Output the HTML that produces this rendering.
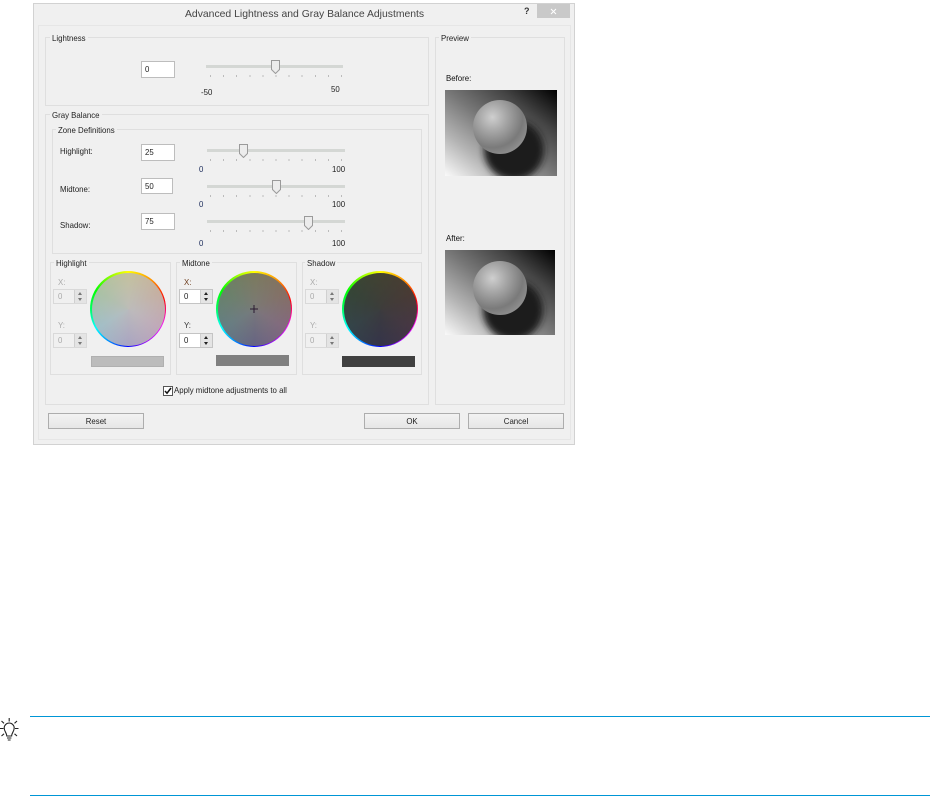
<!DOCTYPE html>
<html><head><meta charset="utf-8">
<style>
html,body{margin:0;padding:0;background:#fff;width:930px;height:796px;overflow:hidden}
body{position:relative;font-family:"Liberation Sans",sans-serif;font-size:7.85px;color:#222}
div,span,svg{position:absolute;box-sizing:border-box}
#w{left:0;top:0;width:930px;height:796px;filter:blur(.3px)}
.t{white-space:nowrap;line-height:12px;height:12px}
.g{border:1px solid #dfdfdf}
.leg{background:#f0f0f0;padding:0 2px;white-space:nowrap;line-height:11px;height:10px}
.in{background:#fff;border:1px solid #bdbdbd;padding-left:3px;line-height:16px}
.track{height:3px;background:#d4d7d4}
.ticks{height:2px;background:repeating-linear-gradient(90deg,#bbb 0 1px,transparent 1px 13.1px)}
.thumb{width:9px;height:14px}
.btn{width:96px;height:16px;border:1px solid #adadad;background:linear-gradient(#f2f2f2,#e6e6e6);text-align:center;line-height:15px}
.sp{width:34px;height:15px;border:1px solid #d9d9d9;background:#f0f0f0;color:#aaa;padding-left:4px;line-height:14px}
.sp.on{background:#fff;color:#222;border-color:#c4c4c4}
.arr{right:0;top:0;width:12px;height:13px;background:#e4e4e4;border-left:1px solid #d0d0d0}
.arr:before{content:"";position:absolute;left:3px;top:2px;border-left:2.5px solid transparent;border-right:2.5px solid transparent;border-bottom:3px solid #777}
.arr:after{content:"";position:absolute;left:3px;top:8px;border-left:2.5px solid transparent;border-right:2.5px solid transparent;border-top:3px solid #777}
.on .arr:before{border-bottom-color:#222}
.on .arr:after{border-top-color:#222}
.wheel{width:76px;height:76px;border-radius:50%;background:conic-gradient(#ffff00 0deg,#ff8000 45deg,#ff0000 75deg,#ff00ff 115deg,#a000ff 150deg,#0000ff 180deg,#00a0ff 215deg,#00ffff 240deg,#00ff60 270deg,#00ff00 300deg,#a0ff00 335deg,#ffff00 360deg)}
.in1{left:1.5px;top:1.5px;width:73px;height:73px;border-radius:50%}
.sw{width:73px;height:11px}
</style></head><body>

<svg width="0" height="0" style="left:0;top:0">
<defs>
<linearGradient id="bg" x1="0" y1="1" x2="1" y2="0"><stop offset="0" stop-color="#fafafa"/><stop offset=".25" stop-color="#b4b4b4"/><stop offset=".5" stop-color="#787878"/><stop offset=".75" stop-color="#444"/><stop offset="1" stop-color="#000"/></linearGradient>
<radialGradient id="sph" cx=".36" cy=".32" r=".75"><stop offset="0" stop-color="#cfcfcf"/><stop offset=".35" stop-color="#a6a6a6"/><stop offset=".75" stop-color="#7a7a7a"/><stop offset="1" stop-color="#929292"/></radialGradient>
<filter id="bl" x="-30%" y="-30%" width="160%" height="160%"><feGaussianBlur stdDeviation="3.5"/></filter>
<clipPath id="cp"><rect width="112" height="86"/></clipPath>
</defs>
</svg>

<div id="w">
<!-- dialog -->
<div style="left:33px;top:3px;width:542px;height:442px;background:#f0f0f0;border:1px solid #d2d2d2"></div>
<div style="left:38px;top:25px;width:533px;height:415px;background:#f0f0f0;border:1px solid #e6e6e6"></div>
<div class="t" style="left:185px;top:9px;font-size:10.4px;height:12px;line-height:12px;color:#444">Advanced Lightness and Gray Balance Adjustments</div>
<div class="t" style="left:524px;top:5px;font-weight:bold;font-size:9px;color:#333">?</div>
<div style="left:537px;top:4px;width:33px;height:14px;background:#c9c9c9"></div>
<svg style="left:550px;top:8px" width="7" height="7" viewBox="0 0 7 7"><path d="M1 1l5 5M6 1l-5 5" stroke="#fff" stroke-width="1"/></svg>

<!-- Lightness -->
<div class="g" style="left:45px;top:37px;width:384px;height:69px"></div>
<div class="leg" style="left:50px;top:33px">Lightness</div>
<div class="in" style="left:141px;top:61px;width:34px;height:17px">0</div>
<div class="track" style="left:206px;top:65px;width:137px"></div>
<div class="ticks" style="left:210px;top:75px;width:132px"></div>
<svg class="thumb" style="left:271px;top:60px" viewBox="0 0 9 14"><path d="M.5.5h8v9l-4 4-4-4z" fill="#ececec" stroke="#9a9a9a"/></svg>
<div class="t" style="left:201px;top:87px">-50</div>
<div class="t" style="left:331px;top:84px">50</div>

<!-- Gray balance -->
<div class="g" style="left:45px;top:114px;width:384px;height:291px"></div>
<div class="leg" style="left:50px;top:110px">Gray Balance</div>
<div class="g" style="left:52px;top:129px;width:370px;height:125px"></div>
<div class="leg" style="left:56px;top:125px">Zone Definitions</div>

<div class="t" style="left:60px;top:146px">Highlight:</div>
<div class="t" style="left:60px;top:184px">Midtone:</div>
<div class="t" style="left:60px;top:220px">Shadow:</div>
<div class="in" style="left:141px;top:144px;width:34px;height:17px">25</div>
<div class="in" style="left:141px;top:178px;width:32px;height:16px">50</div>
<div class="in" style="left:141px;top:213px;width:34px;height:17px">75</div>

<div class="track" style="left:207px;top:149px;width:138px"></div>
<div class="ticks" style="left:210px;top:159px;width:132px"></div>
<svg class="thumb" style="left:239px;top:144px" viewBox="0 0 9 14"><path d="M.5.5h8v9l-4 4-4-4z" fill="#ececec" stroke="#9a9a9a"/></svg>
<div class="t" style="left:199px;top:164px;color:#1a2a5a">0</div>
<div class="t" style="left:332px;top:164px">100</div>

<div class="track" style="left:207px;top:185px;width:138px"></div>
<div class="ticks" style="left:210px;top:195px;width:132px"></div>
<svg class="thumb" style="left:272px;top:180px" viewBox="0 0 9 14"><path d="M.5.5h8v9l-4 4-4-4z" fill="#ececec" stroke="#9a9a9a"/></svg>
<div class="t" style="left:199px;top:199px;color:#1a2a5a">0</div>
<div class="t" style="left:332px;top:199px">100</div>

<div class="track" style="left:207px;top:220px;width:138px"></div>
<div class="ticks" style="left:210px;top:230px;width:132px"></div>
<svg class="thumb" style="left:304px;top:216px" viewBox="0 0 9 14"><path d="M.5.5h8v9l-4 4-4-4z" fill="#ececec" stroke="#9a9a9a"/></svg>
<div class="t" style="left:199px;top:238px;color:#1a2a5a">0</div>
<div class="t" style="left:332px;top:238px">100</div>

<!-- Highlight -->
<div class="g" style="left:50px;top:262px;width:121px;height:113px"></div>
<div class="leg" style="left:54px;top:258px">Highlight</div>
<div class="t" style="left:58px;top:277px;color:#aaa">X:</div>
<div class="sp" style="left:53px;top:289px">0<div class="arr"></div></div>
<div class="t" style="left:58px;top:320px;color:#aaa">Y:</div>
<div class="sp" style="left:53px;top:333px">0<div class="arr"></div></div>
<div class="wheel" style="left:90px;top:271px"><div class="in1" style="background:radial-gradient(circle at 55% 50%,rgba(188,188,188,.95) 0,rgba(188,188,188,.45) 55%,rgba(188,188,188,.1) 100%),conic-gradient(#c8c48e 0deg,#cda68c 60deg,#c39ab6 120deg,#9f98c4 180deg,#94c0cc 240deg,#a0c498 300deg,#c8c48e 360deg)"></div></div>
<div class="sw" style="left:91px;top:356px;background:#bcbcbc;border:1px solid #b0b0b0"></div>

<!-- Midtone -->
<div class="g" style="left:176px;top:262px;width:121px;height:113px"></div>
<div class="leg" style="left:180px;top:258px">Midtone</div>
<div class="t" style="left:184px;top:277px;color:#6b3a1a">X:</div>
<div class="sp on" style="left:179px;top:289px">0<div class="arr"></div></div>
<div class="t" style="left:184px;top:320px;color:#333">Y:</div>
<div class="sp on" style="left:179px;top:333px">0<div class="arr"></div></div>
<div class="wheel" style="left:216px;top:271px"><div class="in1" style="background:radial-gradient(circle at 50% 50%,rgba(122,122,122,.9) 0,rgba(122,122,122,.4) 60%,rgba(122,122,122,.1) 100%),conic-gradient(#7c7a50 0deg,#8a6a58 60deg,#886080 120deg,#5e5a86 180deg,#5a8088 240deg,#5f8660 300deg,#7c7a50 360deg)"></div></div>
<svg style="left:249px;top:304px" width="10" height="10" viewBox="0 0 10 10"><path d="M5 1v8M1 5h8" stroke="#2a1a30" stroke-width="1"/></svg>
<div class="sw" style="left:216px;top:355px;background:#808080"></div>

<!-- Shadow -->
<div class="g" style="left:302px;top:262px;width:120px;height:113px"></div>
<div class="leg" style="left:305px;top:258px">Shadow</div>
<div class="t" style="left:310px;top:277px;color:#aaa">X:</div>
<div class="sp" style="left:305px;top:289px">0<div class="arr"></div></div>
<div class="t" style="left:310px;top:320px;color:#aaa">Y:</div>
<div class="sp" style="left:305px;top:333px">0<div class="arr"></div></div>
<div class="wheel" style="left:342px;top:271px"><div class="in1" style="background:radial-gradient(circle at 50% 50%,rgba(60,60,60,.9) 0,rgba(60,60,60,.4) 60%,rgba(60,60,60,.1) 100%),conic-gradient(#45452c 0deg,#503a30 60deg,#4c3448 120deg,#323050 180deg,#304850 240deg,#324a34 300deg,#45452c 360deg)"></div></div>
<div class="sw" style="left:342px;top:356px;background:#404040"></div>

<!-- checkbox -->
<div style="left:163px;top:386px;width:10px;height:10px;background:#fff;border:1px solid #555"></div>
<svg style="left:164px;top:387px" width="8" height="8" viewBox="0 0 8 8"><path d="M1 4l2 2.2L7 1" fill="none" stroke="#111" stroke-width="1.5"/></svg>
<div class="t" style="left:174px;top:385px">Apply midtone adjustments to all</div>

<!-- Preview -->
<div class="g" style="left:435px;top:37px;width:130px;height:368px"></div>
<div class="leg" style="left:439px;top:33px">Preview</div>
<div class="t" style="left:446px;top:73px;color:#111">Before:</div>
<svg style="left:445px;top:90px" width="112" height="86" viewBox="0 0 112 86">
<g clip-path="url(#cp)"><rect width="112" height="86" fill="url(#bg)"/><circle cx="69" cy="60" r="30" fill="#1f1f1f" filter="url(#bl)"/><circle cx="55" cy="37" r="27" fill="url(#sph)"/></g></svg>
<div class="t" style="left:446px;top:233px;color:#111">After:</div>
<svg style="left:445px;top:250px" width="110" height="85" viewBox="0 0 110 85">
<g clip-path="url(#cp)"><rect width="110" height="85" fill="url(#bg)"/><circle cx="68" cy="60" r="30" fill="#1f1f1f" filter="url(#bl)"/><circle cx="55" cy="38" r="27" fill="url(#sph)"/></g></svg>

<!-- buttons -->
<div class="btn" style="left:48px;top:413px">Reset</div>
<div class="btn" style="left:364px;top:413px">OK</div>
<div class="btn" style="left:468px;top:413px">Cancel</div>

<!-- tip -->
<svg style="left:0;top:716px" width="20" height="26" viewBox="0 0 20 26">
<g fill="none" stroke="#222" stroke-width="1.1">
<path d="M9.200 2v3.500M0 12.500h3.500M15 12.500h3.500M1.500 5l2.500 2.300M17 5l-2.500 2.300M1.500 20l2.500-2.200M17 20l-2.500-2.200"/>
<path d="M6.800 20c0-3-2.600-4.500-2.600-8a5 5 0 0 1 10 0c0 3.500-2.600 5-2.600 8z"/>
<path d="M7 22h4.400M7.800 24h2.800"/>
</g></svg>
<div style="left:30px;top:716px;width:900px;height:1px;background:#0096d6"></div>
<div style="left:30px;top:795px;width:900px;height:1px;background:#0096d6"></div>
</div>
</body></html>
